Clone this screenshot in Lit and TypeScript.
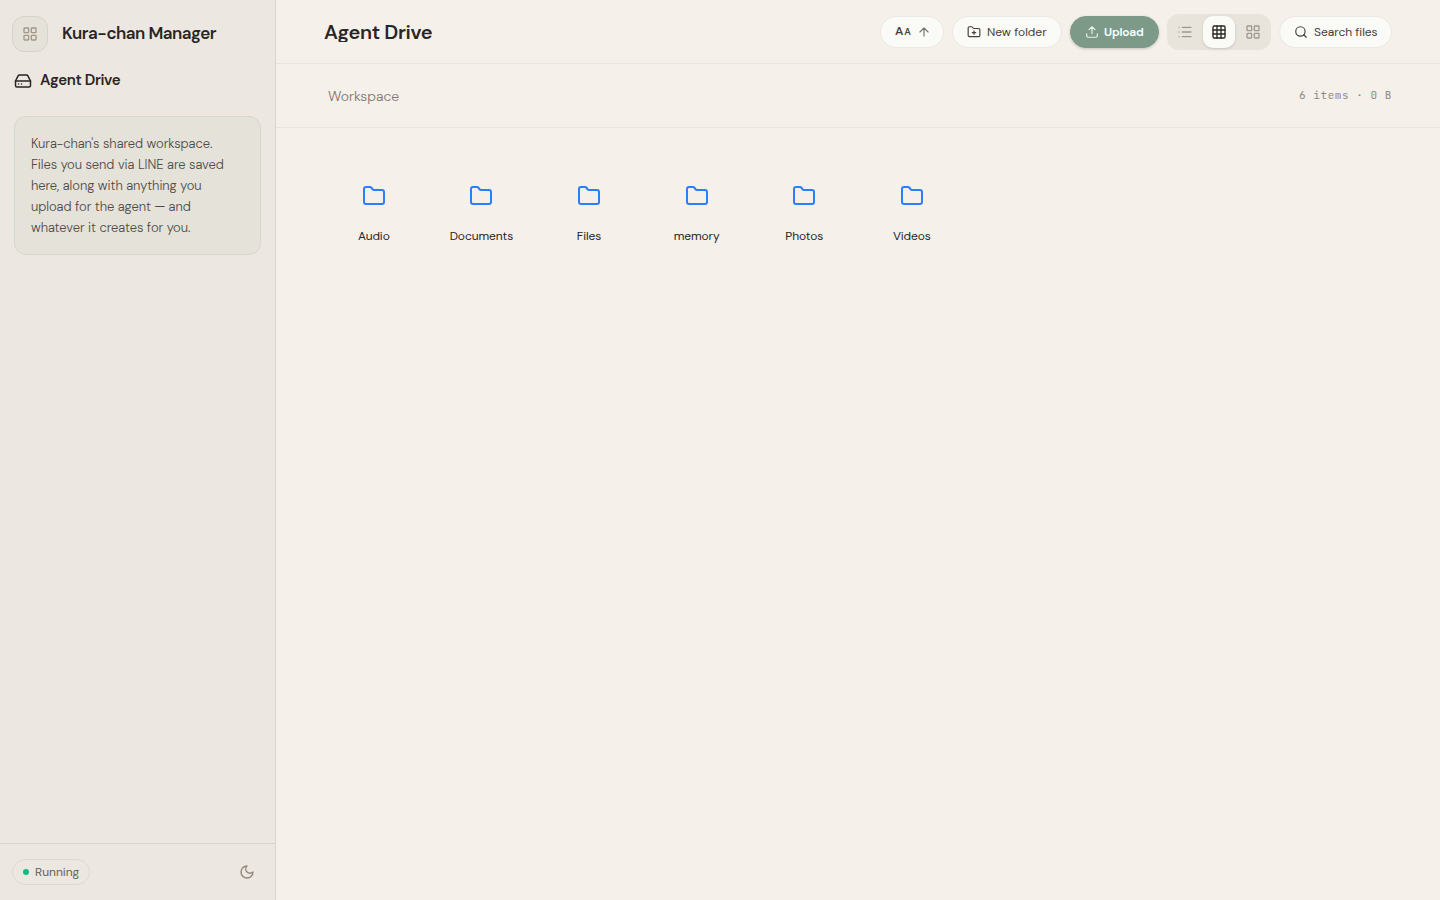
import { LitElement, html, svg, css } from "lit";
import { customElement } from "lit/decorators.js";

const paths = {
  grid: svg`<rect width="7" height="7" x="3" y="3" rx="1"/><rect width="7" height="7" x="14" y="3" rx="1"/><rect width="7" height="7" x="14" y="14" rx="1"/><rect width="7" height="7" x="3" y="14" rx="1"/>`,
  drive: svg`<path d="M22 12H2"/><path d="M5.45 5.11 2 12v6a2 2 0 0 0 2 2h16a2 2 0 0 0 2-2v-6l-3.45-6.89A2 2 0 0 0 16.76 4H7.24a2 2 0 0 0-1.79 1.11z"/><path d="M6 16h.01M10 16h.01"/>`,
  arrow: svg`<path d="m5 12 7-7 7 7M12 19V5"/>`,
  folderPlus: svg`<path d="M12 10v6M9 13h6"/><path d="M20 20a2 2 0 0 0 2-2V8a2 2 0 0 0-2-2h-7.9a2 2 0 0 1-1.69-.9L9.6 3.9A2 2 0 0 0 7.93 3H4a2 2 0 0 0-2 2v13a2 2 0 0 0 2 2Z"/>`,
  upload: svg`<path d="M12 3v12M17 8l-5-5-5 5M21 15v4a2 2 0 0 1-2 2H5a2 2 0 0 1-2-2v-4"/>`,
  list: svg`<path d="M3 5h.01M3 12h.01M3 19h.01M8 5h13M8 12h13M8 19h13"/>`,
  grid3: svg`<rect width="18" height="18" x="3" y="3" rx="2"/><path d="M3 9h18M3 15h18M9 3v18M15 3v18"/>`,
  search: svg`<circle cx="11" cy="11" r="8"/><path d="m21 21-4.34-4.34"/>`,
  folder: svg`<path d="M20 20a2 2 0 0 0 2-2V8a2 2 0 0 0-2-2h-7.9a2 2 0 0 1-1.69-.9L9.6 3.9A2 2 0 0 0 7.93 3H4a2 2 0 0 0-2 2v13a2 2 0 0 0 2 2Z"/>`,
  moon: svg`<path d="M12 3a6 6 0 0 0 9 9 9 9 0 1 1-9-9Z"/>`,
};

const icon = (name: keyof typeof paths, size = 16, stroke = 2) => html`<svg
  width=${size} height=${size} viewBox="0 0 24 24" fill="none" stroke="currentColor"
  stroke-width=${stroke} stroke-linecap="round" stroke-linejoin="round">${paths[name]}</svg>`;

const folders = ["Audio", "Documents", "Files", "memory", "Photos", "Videos"];

@customElement("app-root")
export class AppRoot extends LitElement {
  static styles = css`
    :host { display: flex; height: 100vh; box-sizing: border-box; background: #f5f0ea; color: #292524;
      font-family: "DM Sans", Inter, sans-serif; font-size: 12px; overflow: hidden; }
    * { box-sizing: border-box; }
    svg { display: block; flex: none; }
    aside { width: 276px; flex: none; display: flex; flex-direction: column; background: #ece7e0; border-right: 1px solid #d9d5cd; }
    .brand { display: flex; align-items: center; gap: 14px; padding: 16px 12px 0; height: 52px; }
    .home { width: 36px; height: 36px; border-radius: 12px; border: 1px solid #d6d3ca; background: #e5e2d9; color: #a09889; display: grid; place-items: center; }
    .brand-name { font-size: 17px; font-weight: 600; line-height: 24px; letter-spacing: -0.51px; white-space: nowrap; padding-bottom: 3px; }
    .nav { display: flex; align-items: center; gap: 8px; padding: 0 14px; margin-top: 16px; height: 24px; }
    .nav svg { margin-top: 1px; }
    .nav-name { font-size: 15px; font-weight: 600; letter-spacing: -0.35px; white-space: nowrap; }
    .note { margin: 24px 14px 0; height: 139px; border: 1px solid #d5d8cc; border-radius: 12px; background: #e4e2d9; padding: 16px;
      font-size: 13px; font-weight: 300; line-height: 21px; color: #4f4a46; white-space: pre; letter-spacing: -0.05px; }
    .foot { margin-top: auto; height: 57px; border-top: 1px solid #d9d5cd; display: flex; align-items: center; justify-content: space-between; padding: 0 20px 0 12px; color: #8f8778; }
    .status { height: 26px; border: 1px solid #dfdad1; border-radius: 13px; display: flex; align-items: center; gap: 6px; padding: 0 10px; color: #66605a; width: 78px; white-space: nowrap; }
    .dot { width: 6px; height: 6px; border-radius: 50%; background: #10bc80; flex: none; }
    main { flex: 1; min-width: 0; display: flex; flex-direction: column; }
    header { height: 64px; border-bottom: 1px solid #e8e4dc; padding: 0 48px; display: flex; align-items: center; justify-content: space-between; }
    h1 { margin: 0; font-size: 20px; font-weight: 600; line-height: 20px; overflow: hidden; letter-spacing: -0.36px; white-space: nowrap; }
    .tools { display: flex; align-items: center; gap: 8px; }
    .pill { height: 32px; border: 1px solid #ece8e1; border-radius: 16px; background: #fafaf6; display: flex; align-items: center; padding: 0 14px; gap: 6px; color: #44403c; white-space: nowrap; }
    .sort { width: 64px; justify-content: space-between; font-weight: 600; }
    .sort svg { color: #78716c; }
    .aa { font-size: 12px; line-height: 16px; display: flex; align-items: baseline; gap: 1px; padding-bottom: 1px; }
    .aa small { font-size: 9.5px; }
    .new { width: 110px; }
    .find { width: 113px; letter-spacing: -0.03px; }
    .primary { width: 89px; background: #7c9a87; border-color: #7c9a87; color: #fff; font-weight: 600; letter-spacing: -0.2px; gap: 5px; box-shadow: 0 1px 3px #0003; }
    .primary svg { opacity: .85; }
    .views { height: 36px; padding: 2px; display: flex; gap: 2px; border-radius: 12px; background: #e8e4dc; }
    .view { width: 32px; height: 32px; display: grid; place-items: center; border-radius: 10px; color: #a09890; }
    .on { background: #fafaf6; color: #292524; box-shadow: 0 1px 3px #0002; }
    .path { height: 64px; border-bottom: 1px solid #e8e4dc; padding: 0 48px 0 52px; display: flex; align-items: center; justify-content: space-between; color: #8f8982; }
    .crumb { font-size: 14px; font-weight: 300; color: #7d7771; white-space: nowrap; padding-top: 1px; }
    .count { font: 11px/16px "JetBrains Mono", "Liberation Mono", monospace; letter-spacing: .55px; white-space: pre; padding-bottom: 2px; }
    .files { display: grid; grid-template-columns: repeat(10, 1fr); gap: 8px; padding: 40px 48px; }
    .file { height: 96px; padding-top: 16px; display: flex; flex-direction: column; align-items: center; gap: 20px; }
    .file svg { color: #2b7fff; }
    .file span { line-height: 16px; white-space: nowrap; letter-spacing: -0.1px; }
  `;

  render() {
    return html`
      <aside>
        <div class="brand"><div class="home">${icon("grid")}</div><div class="brand-name">Kura-chan Manager</div></div>
        <div class="nav">${icon("drive", 18)}<span class="nav-name">Agent Drive</span></div>
        <div class="note">${"Kura-chan's shared workspace.\nFiles you send via LINE are saved\nhere, along with anything you\nupload for the agent — and\nwhatever it creates for you."}</div>
        <div class="foot"><div class="status"><i class="dot"></i><span>Running</span></div><div>${icon("moon")}</div></div>
      </aside>
      <main>
        <header>
          <h1>Agent Drive</h1>
          <div class="tools">
            <div class="pill sort"><span class="aa">A<small>A</small></span>${icon("arrow", 14)}</div>
            <div class="pill new">${icon("folderPlus", 14)}<span>New folder</span></div>
            <div class="pill primary">${icon("upload", 14)}<span>Upload</span></div>
            <div class="views">
              <div class="view">${icon("list")}</div>
              <div class="view on">${icon("grid3")}</div>
              <div class="view">${icon("grid")}</div>
            </div>
            <div class="pill find">${icon("search", 14)}<span>Search files</span></div>
          </div>
        </header>
        <div class="path"><span class="crumb">Workspace</span><span class="count">6 items · 0 B</span></div>
        <div class="files">${folders.map((f) => html`<div class="file">${icon("folder", 24)}<span>${f}</span></div>`)}</div>
      </main>`;
  }
}
